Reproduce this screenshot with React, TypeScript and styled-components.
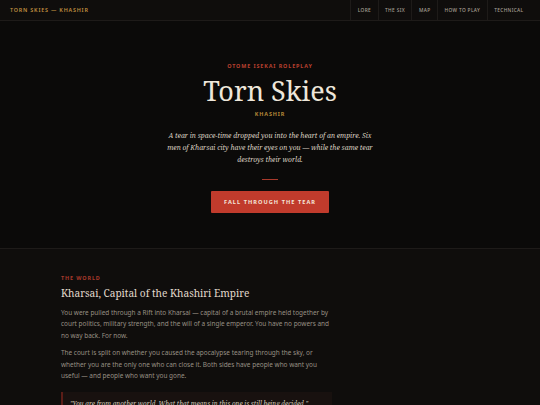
import * as React from 'react';
import styled, { createGlobalStyle } from 'styled-components';

const GlobalStyle = createGlobalStyle`
    html, body {
        margin: 0;
        padding: 0;
        background: #0f0d0c;
    }
    body {
        font-family: "Noto Sans", "Open Sans", sans-serif;
        -webkit-font-smoothing: antialiased;
    }
`;

const serif = `"Noto Serif", "DejaVu Serif", "Liberation Serif", serif`;

const Page = styled.div`
    width: 540px;
    height: 405px;
    background: #0f0d0c;
    overflow: hidden;
`;

const NavBar = styled.nav`
    display: flex;
    align-items: stretch;
    justify-content: space-between;
    height: 20px;
    border-bottom: 1px solid #1e1b19;
    padding-left: 10px;
    padding-right: 10px;
`;

const Brand = styled.a`
    display: flex;
    align-items: center;
    font-size: 5.4px;
    font-weight: 600;
    letter-spacing: 0.8px;
    color: #c09040;
    text-transform: uppercase;
`;

const NavList = styled.ul`
    display: flex;
    list-style: none;
    margin: 0;
    padding: 0;
`;

const NavItem = styled.li`
    display: flex;
    align-items: center;
    padding: 0 6.5px;
    border-left: 1px solid #1e1b19;
    font-size: 4.8px;
    font-weight: 500;
    letter-spacing: 0.35px;
    color: #a8a096;
    text-transform: uppercase;
`;

const Hero = styled.header`
    display: flex;
    flex-direction: column;
    align-items: center;
    background: #0b0a09;
    border-bottom: 1px solid #1e1b19;
    padding: 41px 20px 35px;
    text-align: center;
`;

const Eyebrow = styled.div<{ $color: string }>`
    font-size: 5.4px;
    font-weight: 700;
    letter-spacing: 0.9px;
    text-transform: uppercase;
    color: ${p => p.$color};
`;

const Title = styled.h1`
    margin: 5px 0 3px;
    font-family: ${serif};
    font-weight: 400;
    font-size: 27px;
    line-height: 32px;
    color: #eee7da;
`;

const Tagline = styled.p`
    margin: 12px 0 0;
    max-width: 208px;
    font-family: ${serif};
    font-style: italic;
    font-size: 6.8px;
    line-height: 12px;
    color: #dad0c1;
`;

const Rule = styled.div`
    width: 16px;
    height: 1px;
    margin-top: 13px;
    background: #a83a2c;
`;

const CtaButton = styled.button`
    margin-top: 11px;
    height: 22px;
    padding: 0 13px;
    border: none;
    border-radius: 1px;
    background: #c13b2c;
    color: #f4e6da;
    font-family: "Noto Sans", sans-serif;
    font-size: 5.6px;
    font-weight: 700;
    letter-spacing: 1.05px;
    text-transform: uppercase;
    cursor: pointer;
`;

const Section = styled.section`
    padding: 25px 61px 0;
`;

const Column = styled.div`
    max-width: 271px;
`;

const Heading = styled.h2`
    margin: 4px 0 6px;
    font-family: ${serif};
    font-weight: 400;
    font-size: 10.1px;
    line-height: 15px;
    color: #e2dacd;
`;

const Para = styled.p`
    margin: 0 0 6px;
    font-size: 6.45px;
    line-height: 11.4px;
    color: #989084;
`;

const Quote = styled.blockquote`
    margin: 11px 0 0;
    padding: 6px 10px 10px 7px;
    border-left: 2px solid #5b1d17;
    background: #18110f;
    font-family: ${serif};
    font-style: italic;
    font-size: 6.4px;
    line-height: 11px;
    color: #cfc6b8;
`;

export default function App() {
    const tabs = ["Lore", "The Six", "Map", "How to Play", "Technical"];

    return (
        <Page>
            <GlobalStyle />
            <NavBar>
                <Brand>Torn Skies — Khashir</Brand>
                <NavList>
                    {tabs.map((t, i) => <NavItem key={i}>{t}</NavItem>)}
                </NavList>
            </NavBar>

            <Hero>
                <Eyebrow $color="#b8402f">Otome Isekai Roleplay</Eyebrow>
                <Title>Torn Skies</Title>
                <Eyebrow $color="#b58838">Khashir</Eyebrow>
                <Tagline>
                    A tear in space-time dropped you into the heart of an empire. Six men of Kharsai city
                    have their eyes on you — while the same tear destroys their world.
                </Tagline>
                <Rule />
                <CtaButton>Fall Through the Tear</CtaButton>
            </Hero>

            <Section>
                <Column>
                    <Eyebrow $color="#a8392b">The World</Eyebrow>
                    <Heading>Kharsai, Capital of the Khashiri Empire</Heading>
                    <Para>
                        You were pulled through a Rift into Kharsai — capital of a brutal empire held together by
                        court politics, military strength, and the will of a single emperor. You have no powers and
                        no way back. For now.
                    </Para>
                    <Para>
                        The court is split on whether you caused the apocalypse tearing through the sky, or
                        whether you are the only one who can close it. Both sides have people who want you
                        useful — and people who want you gone.
                    </Para>
                    <Quote>
                        "You are from another world. What that means in this one is still being decided."
                    </Quote>
                </Column>
            </Section>
        </Page>
    );
}
